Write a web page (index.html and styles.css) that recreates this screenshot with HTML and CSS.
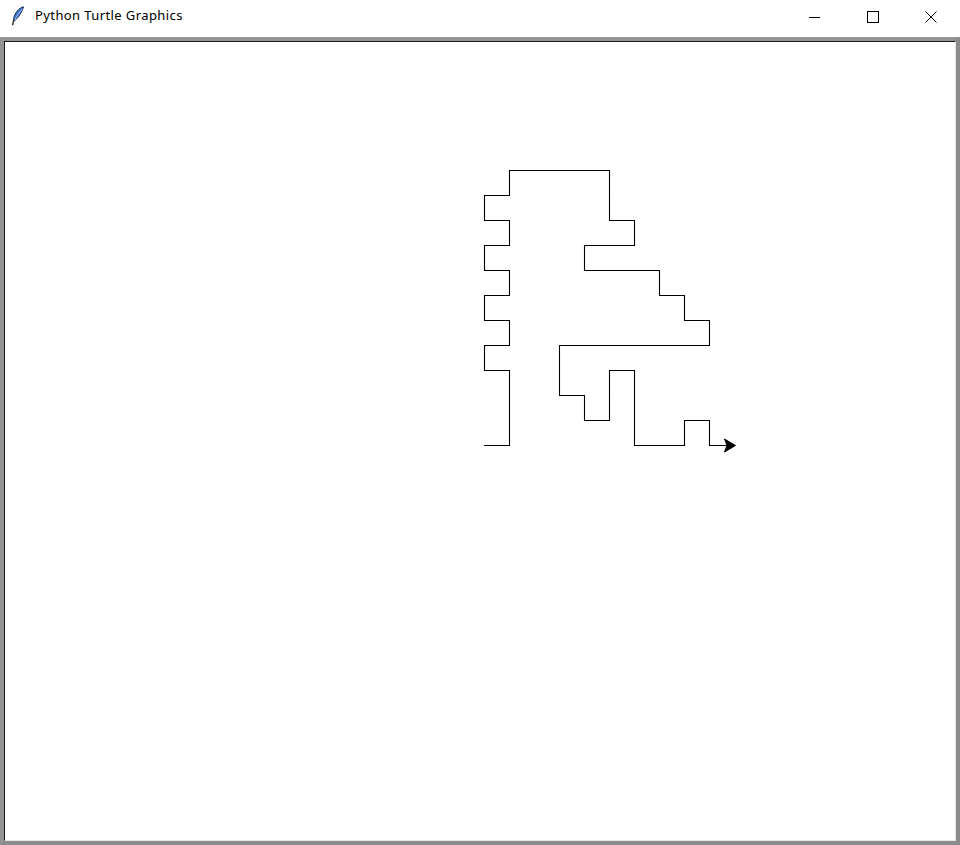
FILE: index.html
```html
<!DOCTYPE html>
<html>
<head>
<meta charset="utf-8">
<title>Python Turtle Graphics</title>
<link rel="stylesheet" href="styles.css">
</head>
<body>
<div class="window">
  <div class="titlebar">
    <div class="title">
      <svg class="feather" width="14" height="20" viewBox="0 0 14 20">
        <path d="M12.5 0.8 C8 2 4 6.5 2.6 12.5 L3.2 15 C6.5 12.5 10.5 7.5 12.5 0.8 Z" fill="#3d74cf" stroke="#1b2b50" stroke-width="1"/>
        <path d="M11.3 3 C8.5 6 5.5 10.5 3.5 14.5" stroke="#a8cdf5" stroke-width="0.9" fill="none"/>
        <path d="M3 13.5 L1.5 19.2" stroke="#2a2a2a" stroke-width="1.4" fill="none"/>
      </svg>
      <span class="title-text">Python Turtle Graphics</span>
    </div>
    <div class="controls">
      <div class="ctl">
        <svg width="12" height="12" viewBox="0 0 12 12"><path d="M0 6.5 H11" stroke="#000" stroke-width="1"/></svg>
      </div>
      <div class="ctl">
        <svg width="12" height="12" viewBox="0 0 12 12"><rect x="0.5" y="0.5" width="11" height="11" fill="none" stroke="#000" stroke-width="1"/></svg>
      </div>
      <div class="ctl">
        <svg width="12" height="12" viewBox="0 0 12 12"><path d="M0.5 0.5 L11.5 11.5 M11.5 0.5 L0.5 11.5" stroke="#000" stroke-width="1"/></svg>
      </div>
    </div>
  </div>
  <div class="frame">
    <div class="canvas">
      <svg class="drawing" width="950" height="798" viewBox="0 0 950 798">
        <g transform="translate(-4.5 -41.5)">
          <polyline fill="none" stroke="#000" stroke-width="1.1" stroke-linejoin="miter" stroke-linecap="square"
            points="484,445 509,445 509,370 484,370 484,345 509,345 509,320 484,320 484,295 509,295 509,270 484,270 484,245 509,245 509,220 484,220 484,195 509,195 509,170 609,170 609,220 634,220 634,245 584,245 584,270 659,270 659,295 684,295 684,320 709,320 709,345 559,345 559,395 584,395 584,420 609,420 609,370 634,370 634,445 684,445 684,420 709,420 709,445 726,445"/>
          <polygon points="735,445 724,438.5 726.5,445 724,451.5" fill="#000" stroke="#000" stroke-width="1" stroke-linejoin="round"/>
        </g>
      </svg>
    </div>
  </div>
</div>
</body>
</html>
```

FILE: styles.css
```css
html, body {
  margin: 0;
  padding: 0;
  background: #ffffff;
}

.window {
  width: 960px;
  height: 845px;
  display: flex;
  flex-direction: column;
  background: #ffffff;
  overflow: hidden;
}

.titlebar {
  height: 37px;
  flex: 0 0 37px;
  display: flex;
  justify-content: space-between;
  align-items: flex-start;
  background: #ffffff;
}

.title {
  display: flex;
  align-items: center;
  height: 32px;
  padding-left: 11px;
  gap: 10px;
}

.feather {
  display: block;
}

.title-text {
  font-family: "Noto Sans", "Liberation Sans", sans-serif;
  font-size: 13px;
  color: #000000;
  letter-spacing: 0.4px;
  position: relative;
  top: -1px;
}

.controls {
  display: flex;
  height: 33px;
}

.ctl {
  width: 58px;
  height: 33px;
  display: flex;
  align-items: center;
  justify-content: center;
}

.ctl svg {
  display: block;
}

.frame {
  flex: 1 1 auto;
  border: 4px solid #8c8c8c;
  border-top-color: #939393;
  border-left-color: #939393;
  display: flex;
  min-height: 0;
}

.canvas {
  flex: 1 1 auto;
  background: #ffffff;
  border-top: 1px solid #1a1a1a;
  border-left: 1px solid #1a1a1a;
  border-right: 1px solid #e6e6e6;
  border-bottom: 1px solid #e6e6e6;
  overflow: hidden;
  position: relative;
}

.drawing {
  display: block;
}
```
